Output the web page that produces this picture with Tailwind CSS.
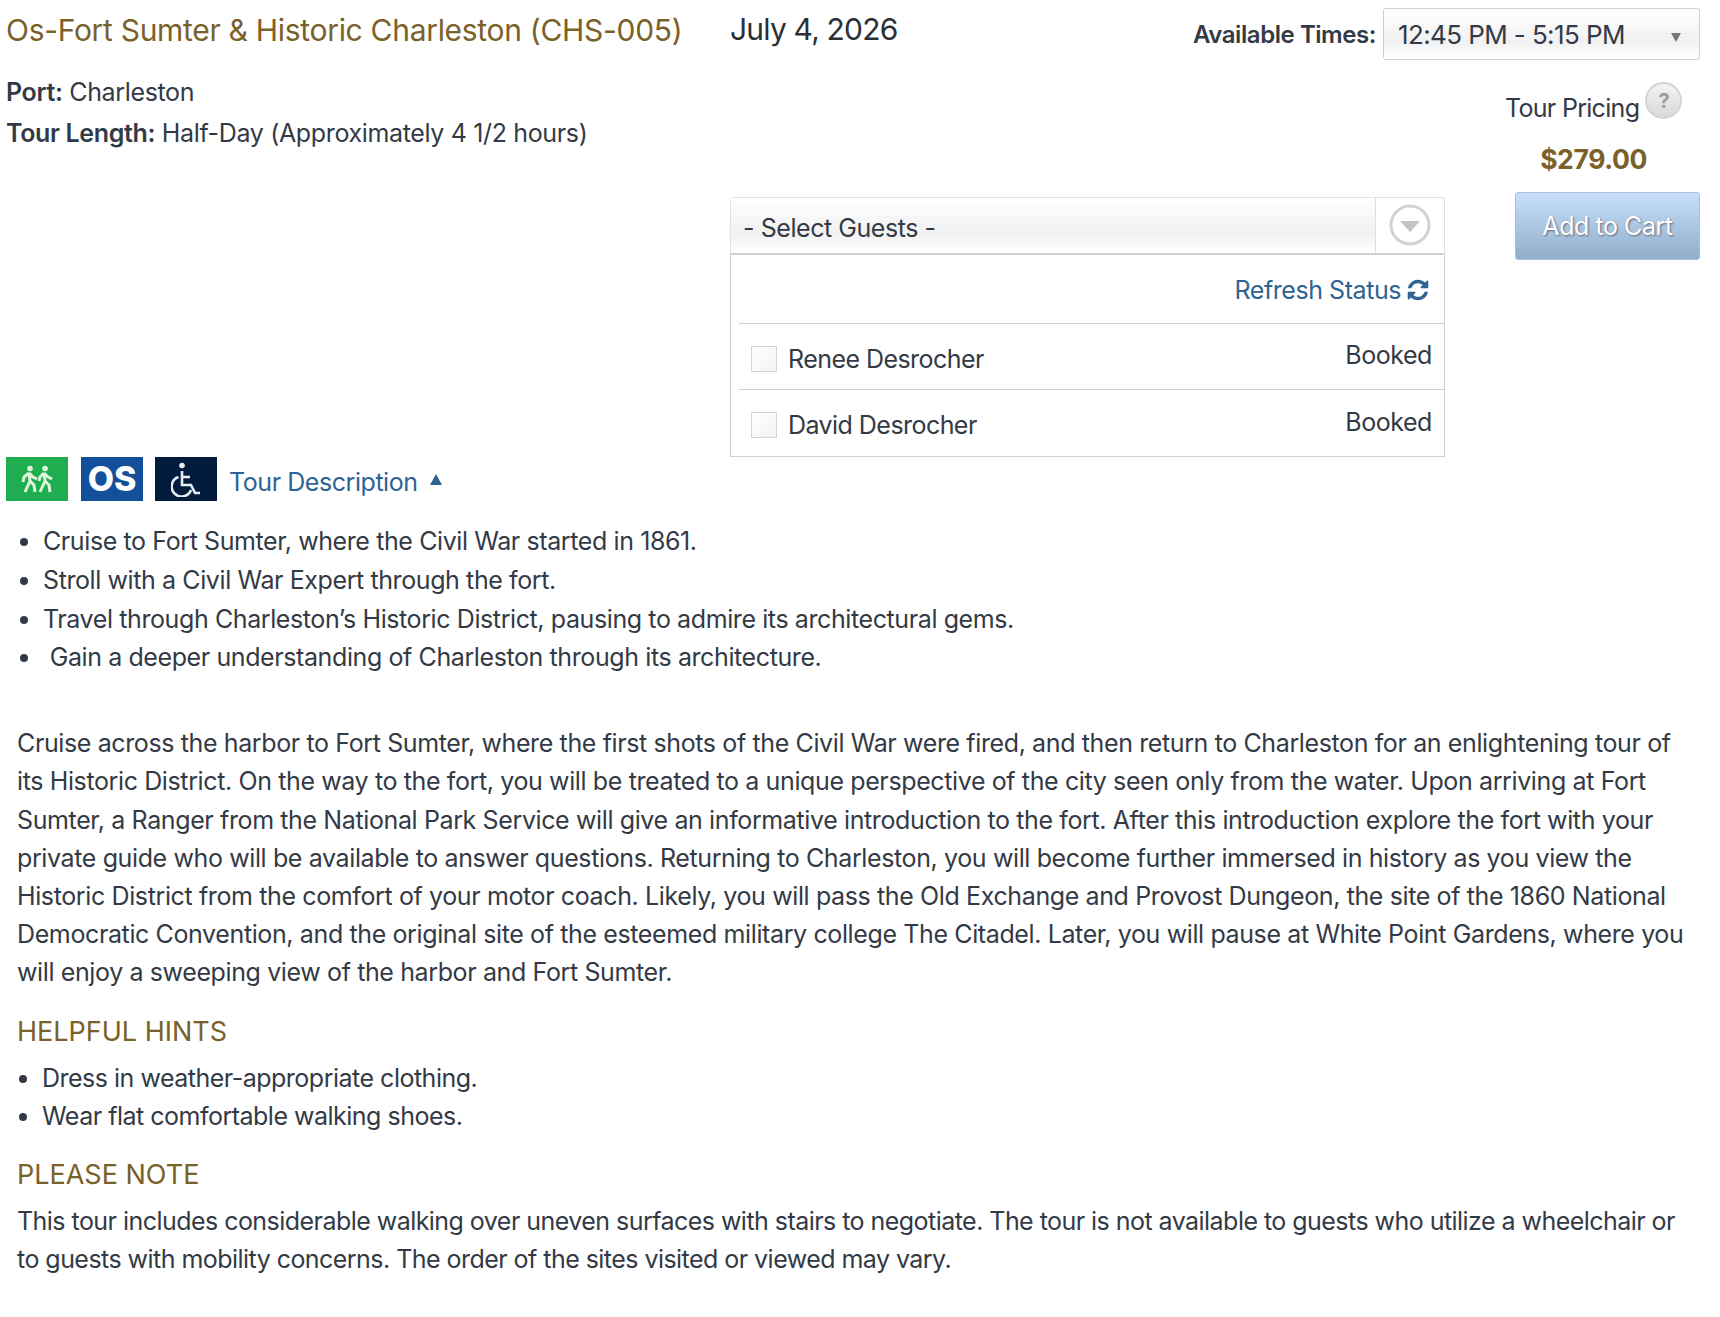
<!DOCTYPE html>
<html lang="en">
<head>
    <meta charset="UTF-8">
    <title>Tour Details</title>
    <script src="https://cdn.jsdelivr.net/npm/@tailwindcss/browser@4"></script>
</head>
<body class="bg-white font-['Inter',sans-serif] text-[25px] leading-[38px] text-[#333a45] tracking-[-0.44px]">
<div class="w-[1720px] h-[1317px] relative overflow-hidden">

    <!-- Top section: title, port info and booking column -->
    <div class="flex h-[452px] pr-[20px]">
        <div class="w-[730px] pl-[6px] shrink-0">
            <h1 class="text-[30px] leading-[40px] pt-[10px] text-[#7a6029] tracking-[-0.3px]">Os-Fort Sumter &amp; Historic Charleston (CHS-005)</h1>
            <p class="mt-[22px] leading-[41px] tracking-[-0.35px]"><b class="font-semibold">Port:</b> Charleston</p>
            <p class="leading-[41px] tracking-[-0.35px]"><b class="font-semibold">Tour Length:</b> Half-Day (Approximately 4 1/2 hours)</p>
        </div>
        <div class="flex-1 min-w-0">
            <div class="flex items-start h-[61px]">
                <span class="text-[30px] leading-[40px] pt-[9px] w-[461px] shrink-0 text-[#2b2f36] tracking-[-0.8px]">July 4, 2026</span>
                <span class="font-semibold text-[24px] pt-[16px] w-[192px] text-right pr-[7px] whitespace-nowrap">Available Times:</span>
                <div class="mt-[8px] w-[317px] h-[52px] border border-[#d0d0d0] rounded-[3px] bg-gradient-to-b from-white via-[#f1f1f1] via-[65%] to-white flex items-center pl-[14px] pt-[2px] text-[26px] tracking-[-0.6px] justify-between pr-[18px]">
                    12:45 PM - 5:15 PM
                    <span class="mt-[4px] w-0 h-0 border-l-[5px] border-r-[5px] border-t-[9px] border-l-transparent border-r-transparent border-t-[#777]"></span>
                </div>
            </div>
            <div class="flex justify-between">
                <div class="mt-[136px] w-[715px]">
                    <div class="h-[58px] flex border border-[#e2e2e2] border-b-2 border-b-[#d0d0d0] rounded-t-[3px]">
                        <div class="flex-1 pl-[12px] pt-[11px] bg-gradient-to-b from-white via-[#f1f1f1] via-[65%] to-white border-r border-[#dedede]">- Select Guests -</div>
                        <div class="w-[68px] flex items-center justify-center">
                            <svg width="44" height="44" viewBox="0 0 44 44"><circle cx="22" cy="21" r="19" fill="#fff" stroke="#d2d2d2" stroke-width="3"/><path d="M12 17h20l-10 11z" fill="#c4c4c4"/></svg>
                        </div>
                    </div>
                    <div class="border border-t-0 border-[#d0d0d0] pl-[8px]">
                        <div class="h-[69px] border-b border-[#d0d0d0] flex items-center justify-end pr-[14px] pt-[2px] text-[#2f6393]">
                            Refresh Status
                            <svg class="ml-[5px]" width="24" height="24" viewBox="0 0 1792 1792" fill="#2f6393"><path d="M1639 1056q0 5-1 7-64 268-268 434.5t-478 166.5q-146 0-282.5-55t-243.5-157l-129 129q-19 19-45 19t-45-19-19-45v-448q0-26 19-45t45-19h448q26 0 45 19t19 45-19 45l-137 137q71 66 161 102t187 36q134 0 250-65t186-179q11-17 53-117 8-23 30-23h192q13 0 22.5 9.5t9.5 22.5zm25-800v448q0 26-19 45t-45 19h-448q-26 0-45-19t-19-45 19-45l138-138q-148-137-349-137-134 0-250 65t-186 179q-11 17-53 117-8 23-30 23h-199q-13 0-22.5-9.5t-9.5-22.5v-7q65-268 270-434.5t480-166.5q146 0 284 55.5t245 156.5l130-129q19-19 45-19t45 19 19 45z"/></svg>
                        </div>
                        <div class="h-[66px] border-b border-[#d0d0d0] flex justify-between pr-[12px] pl-[12px]">
                            <label class="flex items-center gap-[11px] pt-[4px] tracking-[-0.55px]"><span class="w-[26px] h-[26px] border border-[#d4d4d4] bg-gradient-to-br from-white to-[#f2f2f2]"></span>Renee Desrocher</label>
                            <span class="pt-[12px]">Booked</span>
                        </div>
                        <div class="h-[66px] flex justify-between pr-[12px] pl-[12px]">
                            <label class="flex items-center gap-[11px] pt-[4px] tracking-[-0.55px]"><span class="w-[26px] h-[26px] border border-[#d4d4d4] bg-gradient-to-br from-white to-[#f2f2f2]"></span>David Desrocher</label>
                            <span class="pt-[13px]">Booked</span>
                        </div>
                    </div>
                </div>
                <div class="w-[195px] text-center">
                    <div class="flex items-start pt-[21px] h-[78px]">
                        <span class="mt-[7px] mr-[6px] tracking-[-0.7px]">Tour Pricing</span>
                        <span class="w-[37px] h-[37px] rounded-full border-2 border-[#d4d4d4] bg-gradient-to-b from-[#f4f4f4] to-[#d8d8d8] flex items-center justify-center text-[#9a9a9a] text-[20px] font-bold">?</span>
                    </div>
                    <div class="text-[#7a6029] font-bold text-[26.6px] leading-[40px] pr-[18px]">$279.00</div>
                    <div class="mt-[13px] ml-[10px] w-[185px] h-[68px] rounded-[3px] border border-[#a8c0da] bg-gradient-to-b from-[#c8e0fa] to-[#90aecb] flex items-center justify-center text-white text-[25px] [text-shadow:1px_1px_2px_#667]">Add to Cart</div>
                </div>
            </div>
        </div>
    </div>

    <!-- Tour icons and description toggle -->
    <div class="flex items-center pl-[6px] mt-[5px] h-[44px]">
        <div class="w-[62px] h-[44px] bg-[#1fae4f] flex items-center justify-center">
            <svg width="34" height="28" viewBox="0 0 34 28" fill="none" stroke="#dff5d9" stroke-width="3" stroke-linejoin="round">
                <circle cx="10" cy="3.5" r="2.8" fill="#dff5d9" stroke="none"/>
                <circle cx="25" cy="3.5" r="2.8" fill="#dff5d9" stroke="none"/>
                <path d="M9 8 10 16 5 27M10 16 14 20 15 27M9 8 4 12 3 17M9 8 13 12 17 14"/>
                <path d="M24 8 25 16 20 27M25 16 29 20 30 27M24 8 20 12 19 16M24 8 28 12 32 14"/>
            </svg>
        </div>
        <div class="ml-[13px] w-[62px] h-[44px] bg-[#134f9a] flex items-center justify-center text-white font-extrabold text-[34px] tracking-normal">OS</div>
        <div class="ml-[12px] w-[62px] h-[44px] bg-[#021c3e] flex items-center justify-center">
            <svg width="30" height="35" viewBox="0 0 30 35" fill="none" stroke="#e8edf2" stroke-width="2.6"><circle cx="11" cy="3.5" r="2.8" fill="#e8edf2" stroke="none"/><path d="M11 9v14h9l4 8h5"/><path d="M11 15h8"/><path d="M7.5 15a10 10 0 1 0 12.5 13"/></svg>
        </div>
        <a class="ml-[12px] mt-[6px] text-[#2f6393]">Tour Description</a>
        <span class="ml-[12px] w-0 h-0 border-l-[6px] border-r-[6px] border-b-[11px] border-l-transparent border-r-transparent border-b-[#2f6393]"></span>
    </div>

    <!-- Highlights -->
    <ul class="mt-[21px] pl-[43px] list-disc leading-[38.8px] tracking-[-0.4px] marker:text-[#333a45]">
        <li>Cruise to Fort Sumter, where the Civil War started in 1861.</li>
        <li>Stroll with a Civil War Expert through the fort.</li>
        <li>Travel through Charleston’s Historic District, pausing to admire its architectural gems.</li>
        <li>&nbsp;Gain a deeper understanding of Charleston through its architecture.</li>
    </ul>

    <p class="mt-[47px] pl-[17px] w-[1690px] leading-[38.2px] tracking-[-0.38px]">Cruise across the harbor to Fort Sumter, where the first shots of the Civil War were fired, and then return to Charleston for an enlightening tour of its Historic District. On the way to the fort, you will be treated to a unique perspective of the city seen only from the water. Upon arriving at Fort Sumter, a Ranger from the National Park Service will give an informative introduction to the fort. After this introduction explore the fort with your private guide who will be available to answer questions. Returning to Charleston, you will become further immersed in history as you view the Historic District from the comfort of your motor coach. Likely, you will pass the Old Exchange and Provost Dungeon, the site of the 1860 National Democratic Convention, and the original site of the esteemed military college The Citadel. Later, you will pause at White Point Gardens, where you will enjoy a sweeping view of the harbor and Fort Sumter.</p>

    <h2 class="mt-[21px] pl-[17px] text-[27px] text-[#7a6029] tracking-normal">HELPFUL HINTS</h2>
    <ul class="mt-[8px] pl-[42px] list-disc tracking-[-0.5px]">
        <li>Dress in weather-appropriate clothing.</li>
        <li>Wear flat comfortable walking shoes.</li>
    </ul>

    <h2 class="mt-[21px] pl-[17px] text-[27px] text-[#7a6029] tracking-normal">PLEASE NOTE</h2>
    <p class="mt-[8px] pl-[17px] w-[1690px] leading-[38.2px] tracking-[-0.54px]">This tour includes considerable walking over uneven surfaces with stairs to negotiate. The tour is not available to guests who utilize a wheelchair or to guests with mobility concerns. The order of the sites visited or viewed may vary.</p>
</div>
</body>
</html>
